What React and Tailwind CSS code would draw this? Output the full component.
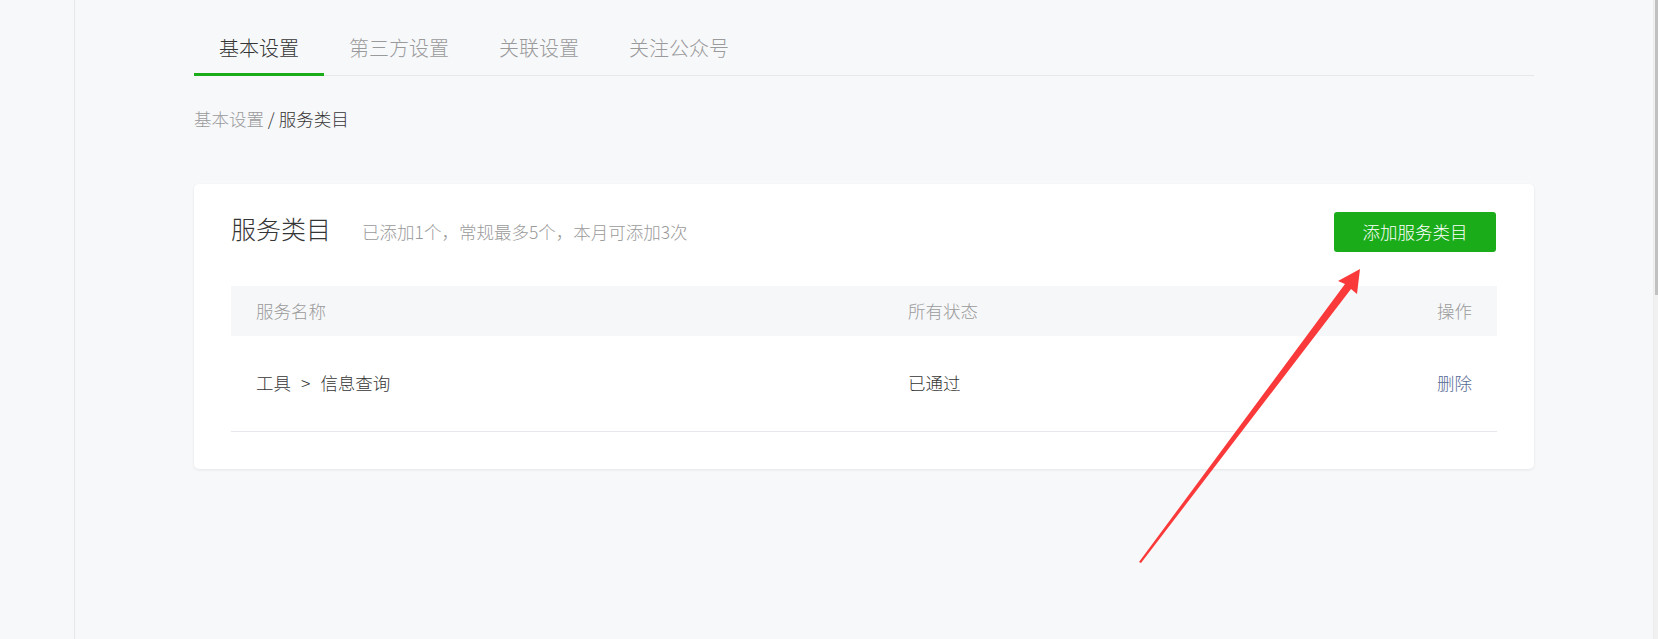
import React from "react";

const font = { fontFamily: '"Noto Sans CJK SC", "Noto Sans", sans-serif' };

export default function App() {
  const tabs = ["基本设置", "第三方设置", "关联设置", "关注公众号"];
  return (
    <div
      className="relative flex h-[639px] w-full overflow-hidden bg-[#f7f8fa] font-light text-[#353535]"
      style={font}
    >
      <aside className="w-[75px] shrink-0 border-r border-[#e7e7eb] bg-[#f7f8fa]" />
      <main className="flex-1 flex justify-center">
        <div className="w-[1340px] pt-[34px]">
          <ul className="flex border-b border-[#e7e7eb]">
            {tabs.map((t, i) => (
              <li
                key={t}
                className={
                  i === 0
                    ? "-mb-px border-b-[3px] border-[#1aad19] px-[25px] pb-[11px] text-[20px] leading-[28px] text-[#353535]"
                    : "-mb-px border-b-[3px] border-transparent px-[25px] pb-[11px] text-[20px] leading-[28px] text-[#9a9a9a]"
                }
              >
                {t}
              </li>
            ))}
          </ul>
          <div className="mt-[31px] text-[17.5px] leading-[24px]">
            <span className="text-[#9a9a9a]">基本设置</span>
            <span className="text-[#353535]"> / 服务类目</span>
          </div>
          <section className="mt-[53px] rounded-[5px] bg-white px-[37px] pb-[37px] pt-[28px] shadow-[0_1px_3px_rgba(0,0,0,0.08)]">
            <div className="flex items-start justify-between">
              <div className="flex items-baseline">
                <h2 className="text-[25px] font-light leading-[32px] text-[#353535]">服务类目</h2>
                <span className="ml-[31px] text-[17.5px] leading-[24px] text-[#9a9a9a]">
                  已添加1个，常规最多5个，本月可添加3次
                </span>
              </div>
              <button className="mr-px flex h-[40px] w-[162px] items-center justify-center rounded-[3px] bg-[#1aad19] text-[17.5px] text-white">
                添加服务类目
              </button>
            </div>
            <div className="mt-[34px]">
              <div className="grid h-[50px] grid-cols-[652px_1fr_auto] items-center bg-[#f6f7f9] px-[25px] text-[17.5px] text-[#9a9a9a]">
                <span>服务名称</span>
                <span>所有状态</span>
                <span>操作</span>
              </div>
              <div className="grid h-[96px] grid-cols-[652px_1fr_auto] items-center border-b border-[#e7e7eb] px-[25px] text-[17.5px] text-[#353535]">
                <span>
                  工具<span className="mx-[10px]">&gt;</span>信息查询
                </span>
                <span>已通过</span>
                <span className="text-[#576b95]">删除</span>
              </div>
            </div>
          </section>
        </div>
      </main>
      <div className="relative w-[5px] shrink-0 border-l border-[#ececec] bg-[#f1f1f1]">
        <div className="absolute right-0 top-0 h-[295px] w-[3px] bg-[#c1c1c1]" />
      </div>
      <svg
        className="pointer-events-none absolute left-0 top-0"
        width="1658"
        height="639"
        viewBox="0 0 1658 639"
      >
        <polygon
          points="1360,269 1357,294 1351,289 1141,563 1139,562 1345,284 1338,281"
          fill="#fa3a3a"
        />
      </svg>
    </div>
  );
}
